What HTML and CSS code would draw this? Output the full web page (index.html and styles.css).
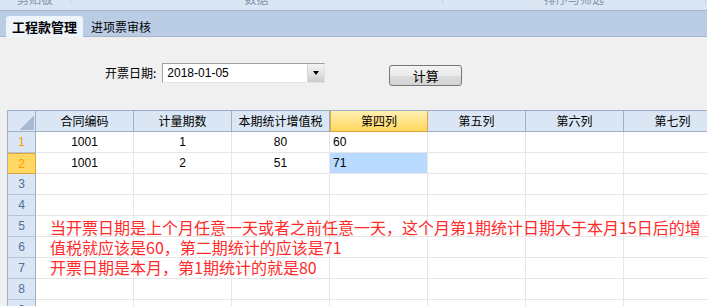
FILE: index.html
```html
<!DOCTYPE html>
<html lang="zh-CN">
  <head>
    <meta charset="UTF-8" />
    <title>工程款管理</title>
    <link rel="stylesheet" href="styles.css">
  </head>
  <body>
    <div class="ribbon">
      <div class="group g1"><span>剪贴板</span></div>
      <div class="group g2"><span>数据</span></div>
      <div class="group g3"><span>排序与筛选</span></div>
    </div>
    <div class="tabs">
      <div class="tab active">工程款管理</div>
      <div class="tab">进项票审核</div>
    </div>

    <div class="form">
      <label class="label">开票日期:</label>
      <div class="select">
        <span class="value">2018-01-05</span>
        <span class="drop"><i></i></span>
      </div>
      <button class="btn">计算</button>
    </div>

    <div class="sheet">
      <div class="grid">
        <div class="hd corner"></div>
        <div class="hd">合同编码</div>
        <div class="hd">计量期数</div>
        <div class="hd">本期统计增值税</div>
        <div class="hd sel">第四列</div>
        <div class="hd">第五列</div>
        <div class="hd">第六列</div>
        <div class="hd">第七列</div>

        <div class="rn hot">1</div>
        <div class="c">1001</div><div class="c">1</div><div class="c">80</div>
        <div class="c left">60</div><div class="c"></div><div class="c"></div><div class="c"></div>

        <div class="rn hot cur">2</div>
        <div class="c">1001</div><div class="c">2</div><div class="c">51</div>
        <div class="c left active">71</div><div class="c"></div><div class="c"></div><div class="c"></div>

        <div class="rn">3</div>
        <div class="c"></div><div class="c"></div><div class="c"></div><div class="c"></div><div class="c"></div><div class="c"></div><div class="c"></div>
        <div class="rn">4</div>
        <div class="c"></div><div class="c"></div><div class="c"></div><div class="c"></div><div class="c"></div><div class="c"></div><div class="c"></div>
        <div class="rn">5</div>
        <div class="c"></div><div class="c"></div><div class="c"></div><div class="c"></div><div class="c"></div><div class="c"></div><div class="c"></div>
        <div class="rn">6</div>
        <div class="c"></div><div class="c"></div><div class="c"></div><div class="c"></div><div class="c"></div><div class="c"></div><div class="c"></div>
        <div class="rn">7</div>
        <div class="c"></div><div class="c"></div><div class="c"></div><div class="c"></div><div class="c"></div><div class="c"></div><div class="c"></div>
        <div class="rn">8</div>
        <div class="c"></div><div class="c"></div><div class="c"></div><div class="c"></div><div class="c"></div><div class="c"></div><div class="c"></div>
        <div class="rn">9</div>
        <div class="c"></div><div class="c"></div><div class="c"></div><div class="c"></div><div class="c"></div><div class="c"></div><div class="c"></div>
      </div>

      <div class="note">
        <p>当开票日期是上个月任意一天或者之前任意一天，这个月第1期统计日期大于本月15日后的增</p>
        <p>值税就应该是60，第二期统计的应该是71</p>
        <p>开票日期是本月，第1期统计的就是80</p>
      </div>
    </div>
  </body>
</html>
```

FILE: styles.css
```css
html,
body {
  margin: 0;
  height: 306px;
  overflow: hidden;
}
body {
  font-family: "Noto Sans CJK SC", "Liberation Sans", sans-serif;
  font-size: 12px;
  color: #000;
  background: #f0f0f0;
}

/* ribbon strip, cut off at the top */
.ribbon {
  display: flex;
  height: 10px;
  overflow: hidden;
  background: #dbe6f4;
  border-bottom: 1px solid #a3b4cb;
}
.group {
  display: flex;
  justify-content: center;
  border-right: 1px solid #c5d0e0;
  height: 4px;
  color: #8495ad;
}
.group span {
  margin-top: -9px;
  line-height: 16px;
  font-size: 12px;
}
.g1 { width: 70px; }
.g2 { width: 371px; }
.g3 { width: 262px; }

/* sheet tabs */
.tabs {
  display: flex;
  align-items: flex-end;
  height: 25px;
  background: #bacde5;
  border-bottom: 1px solid #a7b6ca;
  padding-left: 6px;
}
.tab {
  height: 21px;
  line-height: 21px;
  padding: 0 8px;
  font-size: 12px;
  margin-bottom: -1px;
}
.tab.active {
  width: 77px;
  box-sizing: border-box;
  padding: 0;
  text-align: center;
  font-size: 13px;
  font-weight: bold;
  background: #eef4fc;
  border-radius: 3px 3px 0 0;
  margin-right: 0;
}

/* date + button row */
.form {
  display: flex;
  align-items: flex-start;
  padding: 26px 0 0 105px;
  height: 23px;
}
.label {
  line-height: 20px;
  margin-right: 6px;
}
.select {
  display: flex;
  width: 163px;
  height: 20px;
  box-sizing: border-box;
  background: #fff;
  border: 1px solid;
  border-color: #a0a0a0 #e3e3e3 #e3e3e3 #a0a0a0;
}
.select .value {
  flex: 1;
  line-height: 18px;
  padding-left: 4px;
  font-family: "Liberation Sans", sans-serif;
  font-size: 12px;
}
.drop {
  width: 16px;
  display: flex;
  align-items: center;
  justify-content: center;
  background: linear-gradient(#f4f4f4, #e2e2e2 55%, #c9c9c9);
  border-left: 1px solid #d8d8d8;
}
.drop i {
  width: 0;
  height: 0;
  border-left: 3px solid transparent;
  border-right: 3px solid transparent;
  border-top: 4px solid #000;
  border-bottom: 0;
}
.btn {
  margin: 2px 0 0 64px;
  width: 73px;
  height: 21px;
  padding: 0;
  font-family: inherit;
  font-size: 13px;
  line-height: 19px;
  color: #000;
  border: 1px solid #777;
  border-radius: 3px;
  background: linear-gradient(#f3f3f3, #ebebeb 50%, #dcdcdc 50%, #d3d3d3);
}

/* spreadsheet */
.sheet {
  position: relative;
  margin: 24px 0 0 7px;
}
.grid {
  display: grid;
  grid-template-columns: 28px repeat(7, 98px);
  grid-auto-rows: 21px;
  border-top: 1px solid #9eb0c8;
  border-left: 1px solid #9eb0c8;
  background: #fff;
  width: 714px;
}
.grid > div {
  box-sizing: border-box;
  line-height: 20px;
  text-align: center;
  white-space: nowrap;
  overflow: hidden;
}
.hd {
  background: #dae6f3;
  border-right: 1px solid #9eb0c8;
  border-bottom: 1px solid #9eb0c8;
  font-size: 12px;
}
.hd.sel {
  background: linear-gradient(#ffefb4, #ffd75e);
  border: 1px solid #e0a43d;
  border-top: 0;
}
.corner {
  background: #dae6f3 linear-gradient(to bottom right, transparent 50%, #a9b9d0 50%) no-repeat;
  background-size: 14px 14px;
  background-position: 12px 5px;
}
.rn {
  background: #dae6f3;
  border-right: 1px solid #9eb0c8;
  border-bottom: 1px solid #b6c4d6;
  color: #4f6f9d;
  font-family: "Liberation Sans", sans-serif;
  font-size: 12px;
}
.rn.hot {
  color: #ff9d00;
}
.rn.cur {
  background: #ffd863;
  border: 1px solid #e0a43d;
  border-left: 0;
}
.c {
  border-right: 1px solid #e6e6e6;
  border-bottom: 1px solid #e6e6e6;
  font-family: "Liberation Sans", sans-serif;
}
.c.left {
  text-align: left !important;
  padding-left: 3px;
}
.c.active {
  background: #b8dbff;
}

/* floating text box over the cells */
.note {
  position: absolute;
  left: 43px;
  top: 107px;
  color: #ff2b2b;
  font-size: 16px;
  line-height: 20px;
  white-space: nowrap;
}
.note p {
  margin: 0;
}
```
